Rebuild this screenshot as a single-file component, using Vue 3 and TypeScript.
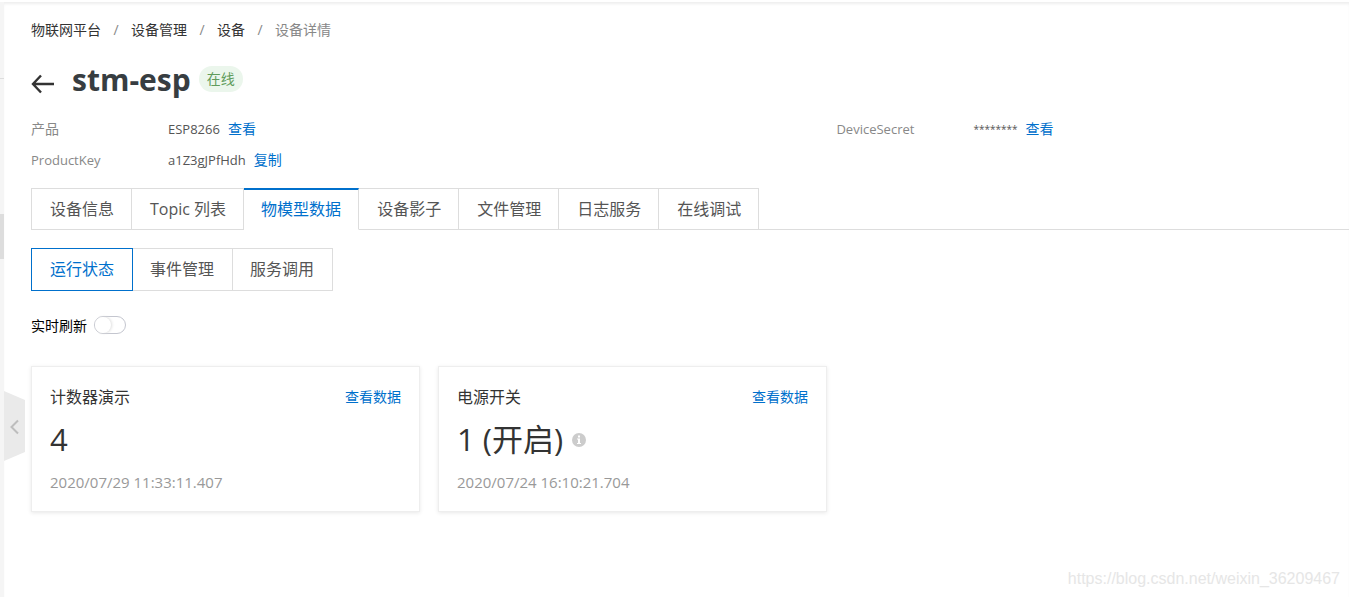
<script setup lang="ts">
import { ref } from 'vue'

interface Card {
  name: string
  value: string
  time: string
  hint: boolean
}

const crumbs: string[] = ['物联网平台', '设备管理', '设备']
const tabs: string[] = ['设备信息', 'Topic 列表', '物模型数据', '设备影子', '文件管理', '日志服务', '在线调试']
const views: string[] = ['运行状态', '事件管理', '服务调用']
const cards: Card[] = [
  { name: '计数器演示', value: '4', time: '2020/07/29 11:33:11.407', hint: false },
  { name: '电源开关', value: '1 (开启)', time: '2020/07/24 16:10:21.704', hint: true },
]

const activeTab = ref(2)
const activeView = ref(0)
const live = ref(false)
</script>

<template>
  <div class="page">
    <aside class="rail">
      <div class="rail-line"></div>
      <div class="rail-thumb"></div>
      <button class="collapse" type="button" aria-label="收起">
        <svg width="21" height="70" viewBox="0 0 21 70">
          <path d="M0 0L21 9V61L0 70Z" fill="#eaeaea" />
          <path d="M14 29.5L7.5 36L14 42.5" fill="none" stroke="#bdbdbd" stroke-width="2" />
        </svg>
      </button>
    </aside>

    <main class="content">
      <nav class="crumbs">
        <template v-for="c in crumbs" :key="c">
          <a href="#">{{ c }}</a>
          <span class="slash">/</span>
        </template>
        <span class="current">设备详情</span>
      </nav>

      <header class="heading">
        <button class="back" type="button" aria-label="返回">
          <svg width="24" height="20" viewBox="0 0 24 20" fill="none" stroke="#333" stroke-width="2.4">
            <path d="M10 1.5L2 10L10 18.5M2 10H23" />
          </svg>
        </button>
        <h1>stm-esp</h1>
        <span class="status">在线</span>
      </header>

      <dl class="info">
        <div class="row">
          <dt>产品</dt>
          <dd>ESP8266 <a href="#">查看</a></dd>
        </div>
        <div class="row">
          <dt>DeviceSecret</dt>
          <dd><span class="secret">********</span> <a href="#">查看</a></dd>
        </div>
        <div class="row">
          <dt>ProductKey</dt>
          <dd>a1Z3gJPfHdh <a href="#">复制</a></dd>
        </div>
      </dl>

      <div class="tabs" role="tablist">
        <button
          v-for="(t, i) in tabs"
          :key="t"
          type="button"
          role="tab"
          class="tab"
          :class="{ active: i === activeTab }"
          :aria-selected="i === activeTab"
          @click="activeTab = i"
        >{{ t }}</button>
      </div>

      <div class="views">
        <button
          v-for="(v, i) in views"
          :key="v"
          type="button"
          class="view"
          :class="{ active: i === activeView }"
          @click="activeView = i"
        >{{ v }}</button>
      </div>

      <div class="refresh">
        <label for="live">实时刷新</label>
        <input id="live" v-model="live" class="switch" type="checkbox" role="switch" />
      </div>

      <section class="cards">
        <article v-for="c in cards" :key="c.name" class="card">
          <div class="card-top">
            <h2>{{ c.name }}</h2>
            <a href="#">查看数据</a>
          </div>
          <div class="value">
            <span>{{ c.value }}</span>
            <svg v-if="c.hint" width="14" height="14" viewBox="0 0 14 14">
              <circle cx="7" cy="7" r="7" fill="#ccc" />
              <path d="M6 2.5h2v2H6zM5 5.5h3v4.5h1v1H5v-1h1V6.5H5z" fill="#fff" />
            </svg>
          </div>
          <time>{{ c.time }}</time>
        </article>
      </section>
    </main>

    <div class="watermark">https://blog.csdn.net/weixin_36209467</div>
  </div>
</template>

<style>
body {
  background: #fff;
}
</style>

<style scoped>
.page {
  position: relative;
  display: flex;
  box-sizing: border-box;
  min-height: 100vh;
  padding-top: 2px;
  overflow: hidden;
  color: #333;
  font: 13px/20px "Open Sans", "Noto Sans CJK SC", sans-serif;
}
.page * {
  box-sizing: border-box;
}
button {
  padding: 0;
  border: 0;
  background: none;
  color: inherit;
  font: inherit;
  cursor: pointer;
}
a {
  color: #0070cc;
  font-size: 14px;
  text-decoration: none;
}
.rail {
  position: relative;
  flex: 0 0 4px;
  background: #f5f5f5;
}
.rail-line {
  height: 1px;
  margin-top: 76px;
  background: #ddd;
}
.rail-thumb {
  height: 45px;
  margin-top: 135px;
  background: #ddd;
}
.collapse {
  position: absolute;
  top: 389px;
  left: 4px;
  width: 21px;
  height: 70px;
}
.collapse svg,
.back svg {
  display: block;
}
.content {
  flex: 1;
  min-width: 0;
  padding: 18px 0 0 27px;
  box-shadow: inset 0 3px 3px -1px #eee;
}
.crumbs {
  display: flex;
  font-size: 14px;
}
.crumbs a {
  color: #333;
}
.slash {
  width: 30px;
  text-align: center;
  color: #888;
}
.current {
  color: #888;
}
.heading {
  display: flex;
  align-items: center;
  height: 40px;
  margin-top: 20px;
}
.back {
  margin: 8px 17px 0 0;
}
h1 {
  margin: 0 8px 0 0;
  color: #373d41;
  font-size: 30px;
  line-height: 40px;
}
.status {
  height: 26px;
  padding: 0 8px;
  border-radius: 13px;
  margin-bottom: 2px;
  background: #ebf6ec;
  color: #619c5c;
  font-size: 14px;
  line-height: 26px;
}
.info {
  display: grid;
  grid-template-columns: 11fr 7fr;
  row-gap: 11px;
  margin: 19px 0 0;
}
.row {
  display: flex;
  height: 20px;
}
dt {
  width: 137px;
  color: #888;
}
.row:first-child dt {
  font-size: 14px;
}
dd {
  display: flex;
  gap: 8px;
  margin: 0;
  color: #555;
}
.secret {
  font-size: 10px;
}
.tabs {
  display: flex;
  margin-top: 18px;
  border-bottom: 1px solid #ddd;
}
.tab,
.view {
  border: 1px solid #ddd;
  border-left-width: 0;
  color: #555;
  font-size: 16px;
  line-height: 24px;
}
.tab {
  height: 42px;
  padding: 0 17px 0 18px;
  margin-bottom: -1px;
}
.tab:first-child {
  border-left-width: 1px;
}
.tab.active {
  padding: 0 17px 2px;
  border-top: 2px solid #0070cc;
  border-bottom-color: #fff;
  background: #fff;
  color: #0070cc;
}
.views {
  display: flex;
  margin-top: 18px;
}
.view {
  height: 43px;
  padding: 0 18px 2px 17px;
}
.view.active {
  padding: 0 18px 2px;
  border: 1px solid #0070cc;
  color: #0070cc;
}
.refresh {
  display: flex;
  align-items: center;
  gap: 7px;
  height: 20px;
  margin-top: 24px;
  color: #000;
  font-size: 14px;
}
.refresh label {
  padding-top: 2px;
}
.switch {
  width: 32px;
  height: 18px;
  margin: 0;
  border: 1px solid #c4c6cf;
  border-radius: 9px;
  appearance: none;
  background: #fff;
}
.switch::before {
  display: block;
  width: 16px;
  height: 16px;
  border-radius: 8px;
  background: #fff;
  box-shadow: 1px 0 3px #ddd;
  content: "";
}
.switch:checked {
  border-color: #0070cc;
  background: #0070cc;
}
.switch:checked::before {
  margin-left: 14px;
}
.cards {
  display: flex;
  gap: 18px;
  margin-top: 31px;
  padding-bottom: 20px;
}
.card {
  flex: 0 1 389px;
  padding: 18px;
  border: 1px solid #eee;
  box-shadow: 0 1px 4px #e8e8e8;
}
.card-top {
  display: flex;
  align-items: center;
  justify-content: space-between;
}
h2 {
  margin: 0;
  font-size: 16px;
  font-weight: 400;
  line-height: 24px;
}
.value {
  display: flex;
  align-items: center;
  gap: 9px;
  height: 48px;
  margin-top: 7px;
  font-size: 31px;
  line-height: 46px;
}
.value span {
  padding-bottom: 2px;
}
time {
  display: block;
  margin-top: 8px;
  color: #999;
  font-size: 15px;
  line-height: 21px;
}
.watermark {
  position: absolute;
  right: 9px;
  bottom: 8px;
  color: #e6e6e6;
  font: 16px/20px "Liberation Sans", sans-serif;
}
</style>
